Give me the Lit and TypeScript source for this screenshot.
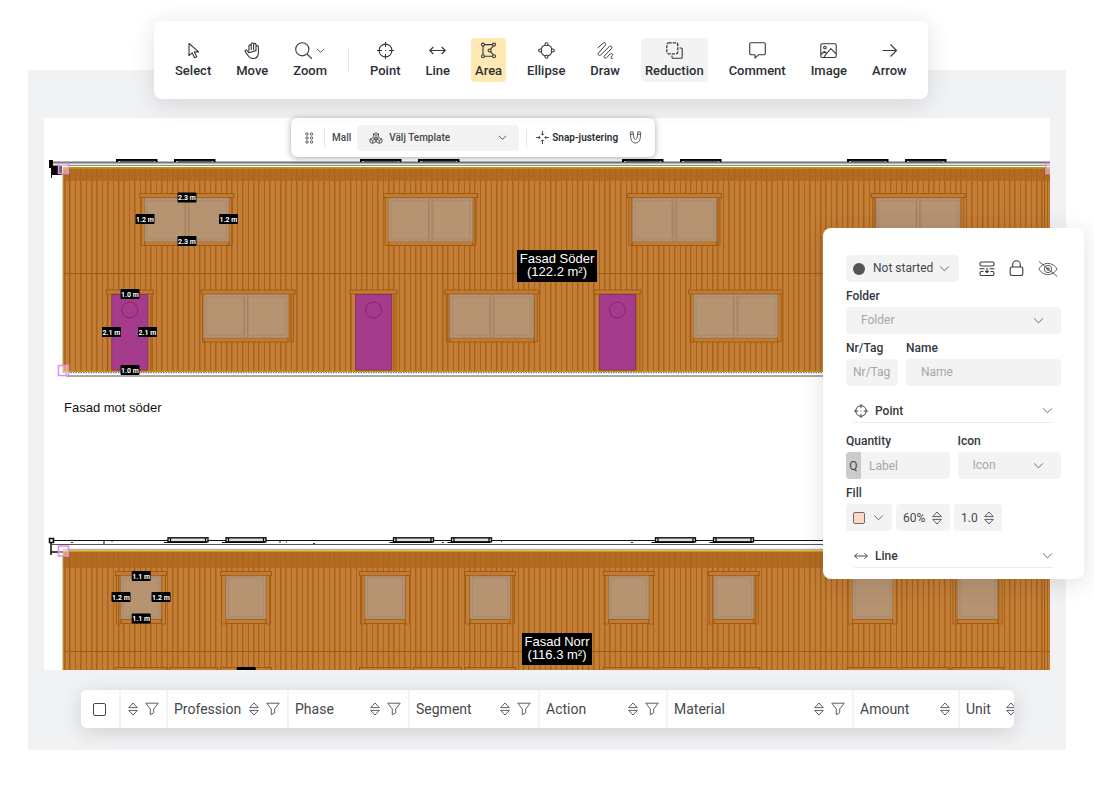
import { LitElement, html, svg, css } from "lit";
import { customElement, property } from "lit/decorators.js";

const glyphs: Record<string, any> = {
  select: svg`<path d="M4 1.500v12.200l3.200-2.900 2.300 4.900 2.200-1-2.300-4.800h4.300z"/>`,
  move: svg`<path d="M4.900 9.600V4a1.150 1.150 0 0 1 2.300 0v4M7.200 8V2a1.150 1.150 0 0 1 2.400 0v6M9.600 8V2.600a1.150 1.150 0 0 1 2.400 0V8M12 8.600V4.800a1.150 1.150 0 0 1 2.400 0v5.600c0 3.500-2 6.100-5.300 6.100-2.700 0-4.200-1.300-5.300-3.300L1.200 9.600c-.5-1.200 1-2 1.800-1.100l1.900 2.300z"/>`,
  zoom: svg`<circle cx="7.300" cy="7.300" r="6.600"/><path d="M12 12l5 4.800"/>`,
  point: svg`<circle cx="8.500" cy="8.500" r="6.400"/><path d="M8.500 0v5M8.500 12v5M0 8.500h5M12 8.500h5M8.500 8v1"/>`,
  line: svg`<path d="M.8 8.500h15.400M4.300 5L.8 8.500 4.300 12M12.700 5l3.500 3.500-3.500 3.500"/>`,
  area: svg`<circle cx="3" cy="2.600" r="1.500"/><circle cx="14" cy="2.600" r="1.500"/><circle cx="3" cy="14.200" r="1.500"/><circle cx="14" cy="14.200" r="1.500"/><circle cx="9.600" cy="8.500" r="1.500"/><path d="M4.500 2.600h8M4.500 14.200h8M3 4.100v8.600M13.300 4.100l-2.900 3.100M13.300 12.700l-2.900-3.100"/>`,
  ellipse: svg`<path d="M3 7.100C3.600 5 5 3.600 7.100 3M9.900 3c2.100.6 3.500 2 4.100 4.100M14 9.900c-.6 2.100-2 3.500-4.100 4.100M7.100 14C5 13.400 3.600 12 3 9.900"/><circle cx="8.500" cy="2.200" r="1.500"/><circle cx="8.500" cy="14.800" r="1.500"/><circle cx="2.200" cy="8.500" r="1.500"/><circle cx="14.800" cy="8.500" r="1.500"/>`,
  draw: svg`<path d="M.8 6L6 1.300c1.700-1.500 3.600.3 2.200 2L1.600 11c-1.300 1.700.5 3.400 2.200 1.900l8.300-8.200c1.700-1.600 3.700.3 2.300 2l-6.800 7c-1.400 1.700.5 3.400 2.100 1.900l3.500-3.600c1.400-1.400 3.300.1 2.100 1.700l-1 1.200c-.9 1.100-.2 1.800 1.900 1.400" stroke-width="1"/>`,
  reduction: svg`<rect x=".8" y=".8" width="11" height="11" rx="1.800" stroke-dasharray="3.100 1.100" stroke-width="1.300"/><path d="M13.500 6h1.700q1 0 1 1v8.200q0 1-1 1H7q-1 0-1-1v-1.700"/>`,
  comment: svg`<path d="M2 .8h13q1.300 0 1.300 1.300v9.300q0 1.300-1.300 1.300H9.700L6 16.200v-3.500H2Q.7 12.700.7 11.400V2.100Q.7.800 2 .8z"/>`,
  image: svg`<rect x=".8" y="1.800" width="15.400" height="13.700" rx="1.500"/><circle cx="4.900" cy="5.500" r="1.300"/><path d="M1 12.500l3.300-3.200 2.300 2.200 4.300-4.800 5.200 5.200M4 14.800l2.600-3.300"/>`,
  arrow: svg`<path d="M1.500 8.500h14M9.500 2.500l6 6-6 6"/>`,
  chevron: svg`<path d="M1.200 3.700l4.800 4.800 4.800-4.800"/>`,
  sort: svg`<path d="M6 1l4.300 4.600H1.700zM6 13l4.300-4.600H1.700z"/>`,
  funnel: svg`<path d="M.8 1.200h12.400L8.700 7v3.800L5.300 12.700V7z"/>`,
  grip: svg`${[2, 6, 10].map((y) => svg`<circle cx="2" cy="${y}" r="1.200"/><circle cx="6.500" cy="${y}" r="1.200"/>`)}`,
  cubes: svg`<path d="M7 .8l2.600 1.300v2.800L7 6.200 4.400 4.900V2.100zM4.400 2.100L7 3.400l2.600-1.300M7 3.400v2.800M3.700 5.800l2.700 1.300v3l-2.700 1.300L1 10.100v-3zM1 7.100l2.700 1.300 2.700-1.300M3.700 8.400v3M10.300 5.800L13 7.100v3l-2.700 1.300-2.700-1.300v-3zM7.600 7.100l2.700 1.300L13 7.100M10.300 8.400v3"/>`,
  snap: svg`<path d="M6.500 0v4M6.500 9v4M0 6.500h4M9 6.500h4M5 2.700l1.500 1.500L8 2.700M5 10.300l1.500-1.500L8 10.300M2.700 5l1.500 1.500L2.700 8M10.300 5L8.800 6.500 10.300 8" stroke-width=".9"/>`,
  magnet: svg`<path d="M1.200 1.200l2.900-.4.700 5.400c.3 2.800 3.100 2.800 3.400 0l.7-5.400 2.900.4-.5 5.600c-.7 7-8.900 7-9.600 0zM1.500 3.500l2.900-.3M11.500 3.500l-2.900-.3"/>`,
  split: svg`<path d="M1 3.500v-1Q1 1 2.500 1h11Q15 1 15 2.500v1Q15 5 13.500 5h-11Q1 5 1 3.500M5.500 14.500h-3Q1 14.500 1 13v-1q0-1.500 1.500-1.500h2M11.500 10.500h2q1.500 0 1.500 1.500v1q0 1.500-1.500 1.500h-8M8 7v4.500M6.200 9.800L8 11.500l1.800-1.700M.5 7.700h5M10.500 7.700h5" stroke-width="1.100"/>`,
  lock: svg`<rect x="1.200" y="7" width="12.600" height="8.500" rx="1.700"/><path d="M3.700 7V4.500a3.800 3.800 0 0 1 7.600 0V7"/>`,
  hidden: svg`<path d="M1 8c3.500-7.500 14-7.500 18 0-4 7.500-14.500 7.500-18 0zM1 .5L19.300 15.500"/><circle cx="10" cy="8" r="3.700"/><circle cx="10" cy="8" r="1.300"/>`,
};

const icon = (name: string, w: number, h: number, size = "") => svg`
  <svg class="icon ${size}" width="${w}" height="${h}" viewBox="0 0 ${w} ${h}" aria-hidden="true">${glyphs[name]}</svg>`;

const iconBase = css`
  .icon { display: block; flex: none; fill: none; stroke: #34383c; stroke-width: 1.1; stroke-linejoin: round; }
  .thin { stroke-width: 0.9; stroke: #4a4e52; }
  * { box-sizing: border-box; }
  button, input, select { font: inherit; color: inherit; margin: 0; padding: 0; border: 0; background: none; border-radius: 0; }
`;

@customElement("tool-bar")
export class ToolBar extends LitElement {
  static styles = [iconBase, css`
    :host { display: block; }
    .bar { display: flex; align-items: center; gap: 17px; padding: 17px; background: #fff; border-radius: 8px; box-shadow: 0 4px 24px rgba(30, 34, 40, 0.14); font: 500 13px/16px Roboto, sans-serif; color: #2c3034; }
    .tool { display: flex; flex-direction: column; align-items: center; gap: 4px; height: 44px; padding: 4px; border-radius: 4px; white-space: nowrap; }
    .active { background: #ffe9b3; }
    .marked { background: #f3f3f3; }
    .glyph { display: flex; align-items: center; gap: 4px; height: 17px; }
    .rule { width: 1px; height: 25px; background: #e8e9ea; }
  `];
  render() {
    const tool = (name: string, label: string, state = "") => html`
      <button class="tool ${state}" type="button">
        <span class="glyph">${icon(name, 17, 17)}${name === "zoom" ? html`<svg class="icon" width="9" height="9" viewBox="0 0 12 12">${glyphs.chevron}</svg>` : ""}</span>
        <span>${label}</span>
      </button>`;
    return html`<nav class="bar" aria-label="Tools">
      ${tool("select", "Select")}${tool("move", "Move")}${tool("zoom", "Zoom")}
      <span class="rule"></span>
      ${tool("point", "Point")}${tool("line", "Line")}${tool("area", "Area", "active")}
      ${tool("ellipse", "Ellipse")}${tool("draw", "Draw")}${tool("reduction", "Reduction", "marked")}
      ${tool("comment", "Comment")}${tool("image", "Image")}${tool("arrow", "Arrow")}
    </nav>`;
  }
}

@customElement("template-bar")
export class TemplateBar extends LitElement {
  static styles = [iconBase, css`
    :host { display: block; }
    .bar { display: flex; align-items: center; height: 39px; padding: 0 13px 0 14px; background: #fff; border-radius: 6px; box-shadow: 0 1px 6px rgba(0, 0, 0, 0.35); font: 500 10px/14px Roboto, sans-serif; color: #44484c; }
    .rule { width: 1px; height: 18px; margin: 0 7px 0 10px; background: #e2e3e4; }
    .picker { display: grid; grid-template-columns: 32px 1fr 21px; align-items: center; width: 162px; height: 26px; margin-left: 6px; background: #f3f3f3; border-radius: 4px; }
    .picker select { grid-area: 1 / 1 / 2 / 4; width: 100%; height: 26px; padding: 0 32px; appearance: none; outline: none; }
    .picker .lead { grid-area: 1 / 1; margin-left: 12px; pointer-events: none; }
    .picker .tail { grid-area: 1 / 3; pointer-events: none; }
    .snap { display: flex; align-items: center; gap: 3px; margin-right: 11px; font-weight: 600; color: #2c3034; }
    .edge { margin-left: 7px; margin-right: 9px; }
  `];
  render() {
    return html`<div class="bar">
      <button type="button" aria-label="Drag">${icon("grip", 9, 12, "thin")}</button>
      <span class="rule"></span>
      <label for="template">Mall</label>
      <span class="picker">
        <select id="template"><option>Välj Template</option></select>
        <span class="lead">${icon("cubes", 14, 12, "thin")}</span>
        <span class="tail"><svg class="icon" width="9" height="9" viewBox="0 0 12 12">${glyphs.chevron}</svg></span>
      </span>
      <span class="rule edge"></span>
      <button class="snap" type="button">${icon("snap", 13, 13)}Snap-justering</button>
      <button type="button" aria-label="Magnet">${icon("magnet", 13, 13, "thin")}</button>
    </div>`;
  }
}

@customElement("property-panel")
export class PropertyPanel extends LitElement {
  static styles = [iconBase, css`
    :host { display: block; }
    .panel { padding: 27px 23px 11px; background: #fff; border-radius: 8px; box-shadow: 0 4px 24px rgba(30, 34, 40, 0.14); font: 400 12px/16px Roboto, sans-serif; color: #44484c; }
    .row { display: flex; gap: 8px; }
    .top { align-items: center; gap: 14px; }
    .fills { gap: 4px; }
    .field { flex: 1; min-width: 0; }
    .tag { flex: 0 0 52px; }
    .label { display: flex; align-items: center; height: 25px; padding-top: 3px; font-weight: 500; color: #34383c; }
    .after { margin-top: 4px; }
    .box { display: flex; align-items: center; width: 100%; height: 27px; background: #f3f3f3; border-radius: 4px; }
    input::placeholder { color: #a5a7a9; opacity: 1; }
    .text { display: block; outline: none; padding: 0 8px 1px 15px; }
    .short { padding: 0 7px 1px; }
    .pick { display: grid; grid-template-columns: 1fr 28px; }
    .pick select { grid-area: 1 / 1 / 2 / 3; width: 100%; height: 27px; padding: 0 0 1px 15px; appearance: none; outline: none; color: #a5a7a9; }
    .pick .icon { grid-area: 1 / 2; pointer-events: none; }
    .status { width: 113px; grid-template-columns: 1fr 20px; margin-right: 6px; }
    .status select { padding-left: 27px; color: #44484c; }
    .dot { grid-area: 1 / 1; width: 12px; height: 12px; margin-left: 7px; border-radius: 50%; background: #555; pointer-events: none; }
    .quantity { overflow: hidden; }
    .prefix { display: flex; align-items: center; justify-content: center; flex: none; width: 15px; height: 27px; background: #cbcbcb; }
    .quantity input { flex: 1; min-width: 0; padding-left: 8px; outline: none; }
    .section { display: flex; align-items: center; gap: 7px; width: 199px; height: 29px; margin: 8px 8px 0; padding-top: 5px; border-bottom: 1px solid #ececec; font-weight: 500; color: #34383c; text-align: left; }
    .section span { flex: 1; }
    .swatch { justify-content: space-between; width: 46px; padding: 0 8px 0 7px; }
    .chip { width: 12px; height: 12px; border: 1px solid #6d6a69; border-radius: 2px; background: #fdd8c6; }
    .percent { width: 54px; padding: 0 7px; }
    .scale { width: 48px; padding: 0 7px; }
    .percent input, .scale input { flex: 1; width: 20px; min-width: 0; outline: none; }
  `];
  private chevron() {
    return html`<svg class="icon thin" width="11" height="11" viewBox="0 0 12 12" aria-hidden="true">${glyphs.chevron}</svg>`;
  }
  render() {
    return html`<section class="panel">
      <div class="row top">
        <span class="box pick status">
          <select aria-label="Status"><option>Not started</option></select>
          <span class="dot"></span>${this.chevron()}
        </span>
        <button type="button" aria-label="Split">${icon("split", 16, 16)}</button>
        <button type="button" aria-label="Lock">${icon("lock", 15, 17)}</button>
        <button type="button" aria-label="Hide">${icon("hidden", 20, 16, "thin")}</button>
      </div>
      <label class="label" for="folder">Folder</label>
      <span class="box pick"><select id="folder"><option>Folder</option></select>${this.chevron()}</span>
      <div class="row">
        <div class="field tag"><label class="label" for="tag">Nr/Tag</label><input id="tag" class="box text short" placeholder="Nr/Tag"></div>
        <div class="field"><label class="label" for="name">Name</label><input id="name" class="box text" placeholder="Name"></div>
      </div>
      <button class="section" type="button">
        <svg class="icon" width="14" height="14" viewBox="0 0 17 17">${glyphs.point}</svg><span>Point</span>${this.chevron()}
      </button>
      <div class="row after">
        <div class="field"><label class="label" for="qty">Quantity</label>
          <span class="box quantity"><span class="prefix">Q</span><input id="qty" placeholder="Label"></span></div>
        <div class="field"><label class="label" for="icon">Icon</label>
          <span class="box pick"><select id="icon"><option>Icon</option></select>${this.chevron()}</span></div>
      </div>
      <label class="label" for="opacity">Fill</label>
      <div class="row fills">
        <button class="box swatch" type="button" aria-label="Fill colour"><span class="chip"></span>${this.chevron()}</button>
        <span class="box percent"><input id="opacity" value="60%">${icon("sort", 12, 14, "thin")}</span>
        <span class="box scale"><input aria-label="Width" value="1.0">${icon("sort", 12, 14, "thin")}</span>
      </div>
      <button class="section" type="button">
        <svg class="icon" width="14" height="14" viewBox="0 0 17 17">${glyphs.line}</svg><span>Line</span>${this.chevron()}
      </button>
    </section>`;
  }
}

interface Column { label: string; width: number; sort?: boolean; filter?: boolean; check?: boolean }

@customElement("column-header")
export class ColumnHeader extends LitElement {
  @property({ attribute: false }) columns: Column[] = [
    { label: "", width: 39, check: true },
    { label: "", width: 47, sort: true, filter: true },
    { label: "Profession", width: 121, sort: true, filter: true },
    { label: "Phase", width: 121, sort: true, filter: true },
    { label: "Segment", width: 130, sort: true, filter: true },
    { label: "Action", width: 128, sort: true, filter: true },
    { label: "Material", width: 186, sort: true, filter: true },
    { label: "Amount", width: 106, sort: true },
    { label: "Unit", width: 66, sort: true },
  ];
  static styles = [iconBase, css`
    :host { display: block; border-radius: 6px; box-shadow: 0 4px 20px rgba(30, 34, 40, 0.16); }
    .clip { overflow: hidden; border-radius: 6px; background: #fff; }
    .grid { width: 944px; table-layout: fixed; border-collapse: collapse; font: 400 14px/20px Roboto, sans-serif; color: #44484c; }
    .cell { height: 38px; padding: 0 7px 0 6px; border-right: 2px solid #f3f3f4; font-weight: 400; text-align: left; }
    .inner { display: flex; align-items: center; justify-content: flex-end; gap: 6px; }
    .name { flex: 1; }
    .tick { display: block; appearance: none; width: 13px; height: 13px; margin-left: 6px; border: 1px solid #44484c; border-radius: 2px; }
  `];
  render() {
    return html`<div class="clip"><table class="grid">
      <colgroup>${this.columns.map((c) => html`<col style="width:${c.width}px">`)}</colgroup>
      <thead><tr>${this.columns.map((c) => html`<th class="cell" scope="col">
        ${c.check ? html`<input class="tick" type="checkbox" aria-label="Select all">` : html`<div class="inner">
          ${c.label ? html`<span class="name">${c.label}</span>` : ""}
          ${c.sort ? html`<button type="button" aria-label="Sort">${icon("sort", 12, 14, "thin")}</button>` : ""}
          ${c.filter ? html`<button type="button" aria-label="Filter">${icon("funnel", 14, 14, "thin")}</button>` : ""}
        </div>`}</th>`)}</tr></thead>
    </table></div>`;
  }
}

@customElement("facade-plan")
export class FacadePlan extends LitElement {
  static styles = css`
    :host { display: block; background: #fff; }
    .plan { display: block; width: 100%; height: auto; }
    .tag { font: 700 7px Roboto, sans-serif; fill: #fff; text-anchor: middle; }
    .title { font: 400 13px "Liberation Sans", Arial, sans-serif; fill: #fff; text-anchor: middle; }
    .note { font: 400 13px "Liberation Sans", Arial, sans-serif; fill: #111; }
    .frame { fill: #c37b31; stroke: #a05a10; stroke-width: 1; }
    .post { fill: none; stroke: #a05a10; stroke-width: 0.9; }
    .glass { fill: #b69472; stroke: #98826a; stroke-width: 1; stroke-dasharray: 1.4 0.8; }
    .pane { fill: none; stroke: #ab8b6c; stroke-width: 1.2; }
    .mullion { fill: none; stroke: #a07f5c; stroke-width: 0.9; }
    .door { fill: #a43c8b; stroke: #8e2d6e; stroke-width: 1; }
    .ring { fill: none; stroke: #822670; stroke-width: 1; }
    .handle { fill: #ffffff66; stroke: #e28be8; stroke-width: 1.5; }
    .seam { stroke: #a25c12; stroke-width: 1; }
  `;
  private double(x: number, y: number, pad = 5, width = 84) {
    const g = x + pad;
    const mid = g + width / 2;
    return svg`
      <path class="post" d="M${x + 1.500} ${y + 4}v48h3.500V${y + 4}M${x + 92.500} ${y + 4}v48h-3.500V${y + 4}"/>
      <rect class="frame" x="${g}" y="${y + 48}" width="${width}" height="4"/>
      <rect class="frame" x="${x}" y="${y}" width="94" height="4"/>
      <rect class="glass" x="${g}" y="${y + 4.500}" width="${width}" height="43.500"/>
      <rect class="pane" x="${g + 2.500}" y="${y + 7}" width="${width / 2 - 5}" height="38.500"/>
      <rect class="pane" x="${mid + 2.500}" y="${y + 7}" width="${width / 2 - 5}" height="38.500"/>
      <path class="mullion" d="M${mid - 1.500} ${y + 5}v43M${mid + 1.500} ${y + 5}v43"/>`;
  }
  private single(x: number) {
    return svg`
      <path class="post" d="M${x + 1} 575v49h4.500v-49M${x + 50} 575v49h-4.500v-49"/>
      <rect class="frame" x="${x + 5.500}" y="619.500" width="40" height="4"/>
      <rect class="frame" x="${x}" y="571.500" width="51" height="4"/>
      <rect class="glass" x="${x + 5.500}" y="576" width="40" height="43"/>
      <rect class="pane" x="${x + 8}" y="578" width="35" height="38.500"/>
      <rect class="frame" x="${x}" y="667.500" width="51" height="5"/>`;
  }
  private door(x: number) {
    return svg`
      <path class="post" d="M${x + 1} 294v77M${x + 46} 294v77"/>
      <rect class="frame" x="${x}" y="290" width="47" height="4"/>
      <rect class="door" x="${x + 5.500}" y="294.500" width="36" height="75.500"/>
      <circle class="ring" cx="${x + 23.500}" cy="310" r="8"/>`;
  }
  private tag(x: number, y: number, text: string) {
    return svg`<rect x="${x - 9.500}" y="${y - 5}" width="19" height="10" rx="1"/><text class="tag" x="${x}" y="${y + 2.500}">${text}</text>`;
  }
  private handle(x: number, y: number) {
    return svg`<rect class="handle" x="${x - 5}" y="${y - 5}" width="10" height="10"/>`;
  }
  render() {
    const step = 243.800;
    return html`<svg class="plan" viewBox="44 118 1006 552" role="img" aria-label="Fasadritning">
      <defs>
        <pattern id="planks" width="27" height="10" patternUnits="userSpaceOnUse" x="63">
          <rect width="28" height="10" fill="#c47e37"/>
          <path d="M1.500 0v10M6.500 0v10M12.500 0v10M17.500 0v10M23.500 0v10" stroke="#a8641b" stroke-width="1.100"/>
          <path d="M2.500 0v10M7.500 0v10M18.500 0v10" stroke="#b87029" stroke-width="1"/>
        </pattern>
        <pattern id="hatch" width="3" height="3" patternUnits="userSpaceOnUse">
          <rect width="3" height="3" fill="#a85f15" fill-opacity=".75"/>
          <path d="M0 3L3 0" stroke="#c27a2c" stroke-width=".7"/>
        </pattern>
      </defs>

      <rect x="63" y="168" width="987" height="204" fill="url(#planks)"/>
      <rect x="63" y="169" width="987" height="12" fill="url(#hatch)"/>
      <path d="M52 162.500H1050" stroke="#707473" stroke-width="1.800"/>
      <path d="M52 165.300H1050" stroke="#777" stroke-width="1"/>
      <path d="M63 167.800H1050" stroke="#c6930f" stroke-width="1.500"/>
      <path d="M63 167v205" stroke="#b39a3c" stroke-width="1"/>
      <path class="seam" d="M64 273.500H1050M69.500 168v204M1044.500 168v204"/>
      <path d="M63 371.300H1050" stroke="#c6930f" stroke-width="1.200"/>
      <path d="M63 372.700H1050" stroke="#555" stroke-width="1" stroke-dasharray="1.500 1"/>
      <path d="M66 373v3H1050" fill="none" stroke="#555" stroke-width="1"/>
      <path d="M49 160h4v6h9v9h-10v3h-1v-10h-2z" fill="#080808"/>
      ${[117, 361, 623, 848].map((x) => [x, x + 58].map((s) => svg`
        <path d="M${s} 162v-2h39.500v2" fill="none" stroke="#000" stroke-width="2"/><path d="M${s + 3} 161.500h34" stroke="#555c58" stroke-width="1.500"/>`))}
      ${[0, 1, 2, 3].map((i) => this.double(139.800 + i * step, 193.500))}
      ${[0, 1, 2].map((i) => this.door(106.300 + i * step))}
      ${[0, 1, 2].map((i) => this.double(201 + i * step, 290, i ? 5 : 3))}
      ${this.tag(187, 197.500, "2.3 m")}${this.tag(145, 219, "1.2 m")}${this.tag(228.500, 219, "1.2 m")}${this.tag(187, 241, "2.3 m")}
      ${this.tag(130, 294, "1.0 m")}${this.tag(111.500, 332, "2.1 m")}${this.tag(147.500, 332, "2.1 m")}${this.tag(130, 370, "1.0 m")}
      ${this.handle(63.500, 168.500)}${this.handle(63.500, 370.500)}${this.handle(1051, 168.500)}
      <rect x="517" y="250" width="80" height="32"/>
      <text class="title" x="557" y="263">Fasad Söder</text><text class="title" x="557" y="276">(122.2 m²)</text>
      <text class="note" x="64" y="412">Fasad mot söder</text>

      <rect x="63" y="551" width="987" height="119" fill="url(#planks)"/>
      <rect x="63" y="552" width="987" height="16" fill="url(#hatch)"/>
      <path d="M52 540.500H1050" stroke="#111" stroke-width="1"/>
      <path d="M52 544.500H1050" stroke="#555" stroke-width="1.200"/>
      <path d="M63 549.300H1050" stroke="#888" stroke-width=".8"/>
      <path d="M63 551H1050" stroke="#d0a51c" stroke-width="1.500"/>
      <path d="M63 551v119" stroke="#b39a3c" stroke-width="1"/>
      <path class="seam" d="M64 651.500H1050M69.500 552v118M1044.500 552v118"/>
      <path d="M49.500 538.500h4v4h-4zM51 543v12M51 552h12" fill="#fff" stroke="#080808" stroke-width="1.500"/>
      <path d="M71 542.500h2M104 541v3M111 541h2M279 542h2M286 542h1M313 543.500h2M442 542.500h2M501 541.500h1M631 542.500h2" stroke="#333" stroke-width="1.200"/>
      ${[168, 393.500, 655.500].map((x) => [x, x + 58].map((s) => svg`
        <rect x="${s}" y="537.800" width="40" height="4" fill="#ddd" stroke="#000" stroke-width="1.300"/><path d="M${s - 4} 542.500h43M${s + 2.500} 538v4M${s + 37.500} 538v4" stroke="#000" stroke-width="1.200"/>`))}
      ${[115.500, 220.500, 359.500, 464.500, 603.300, 708.300, 847, 952].map((x) => this.single(x))}
      ${[169.500, 413.500, 657.300, 901].map((x) => svg`<rect class="frame" x="${x}" y="667.500" width="48" height="5"/>`)}
      ${this.tag(141.200, 576, "1.1 m")}${this.tag(121, 597, "1.2 m")}${this.tag(161, 597, "1.2 m")}${this.tag(141.200, 618.500, "1.1 m")}${this.tag(246.200, 672, "1.1 m")}
      ${this.handle(63.500, 551)}
      <rect x="522" y="633" width="70" height="32"/>
      <text class="title" x="557" y="646">Fasad Norr</text><text class="title" x="557" y="659">(116.3 m²)</text>
    </svg>`;
  }
}

@customElement("app-root")
export class AppRoot extends LitElement {
  static styles = css`
    :host { display: block; min-height: 100vh; padding: 70px 28px 41px; box-sizing: border-box; background: #fff; }
    .workspace { position: relative; padding: 48px 16px 22px; background: #f1f2f4; }
    .columns { margin: 20px 36px 0 37px; }
    .tools { position: absolute; top: -49px; left: 126px; z-index: 2; }
    .template { position: absolute; top: 48px; left: 263px; }
    .properties { position: absolute; top: 158px; right: -18px; width: 261px; z-index: 1; }
  `;
  render() {
    return html`<main class="workspace">
      <facade-plan></facade-plan>
      <column-header class="columns"></column-header>
      <tool-bar class="tools"></tool-bar>
      <template-bar class="template"></template-bar>
      <property-panel class="properties"></property-panel>
    </main>`;
  }
}
